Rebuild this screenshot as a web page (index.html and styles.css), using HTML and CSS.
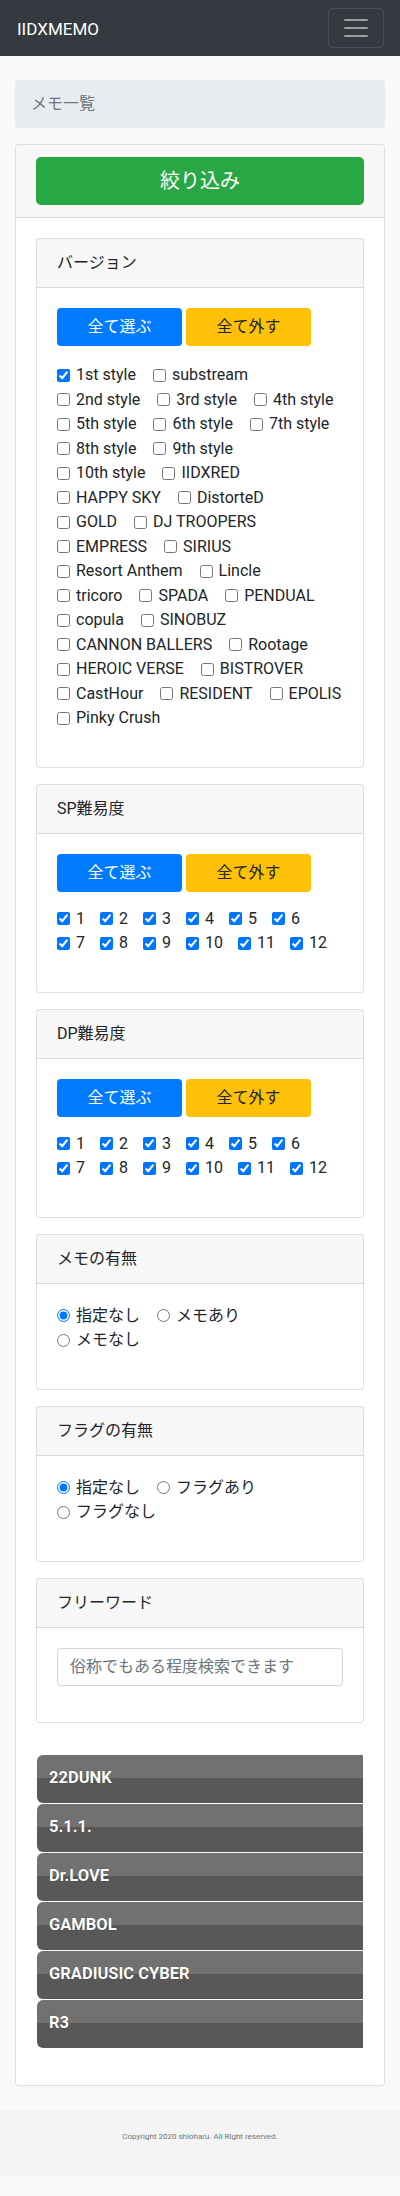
FILE: index.html
```html
<!DOCTYPE html>
<html lang="ja">
<head>
<meta charset="utf-8">
<title>IIDXMEMO</title>
<link rel="stylesheet" href="styles.css">
</head>
<body>
<nav class="navbar">
  <a class="brand" href="#">IIDXMEMO</a>
  <button class="toggler" type="button" aria-label="menu">
    <svg width="30" height="30" viewBox="0 0 30 30"><path d="M4 7h22M4 15h22M4 23h22" stroke="rgba(255,255,255,0.5)" stroke-width="2" stroke-linecap="round"/></svg>
  </button>
</nav>

<main class="container">
  <div class="breadcrumb">メモ一覧</div>

  <div class="card">
    <div class="card-header">
      <button class="btn btn-lg btn-success" type="button">絞り込み</button>
    </div>
    <div class="card-body">

      <section class="card sub">
        <div class="card-header">バージョン</div>
        <div class="card-body">
          <div class="btn-row">
            <button class="btn btn-primary" type="button">全て選ぶ</button>
            <button class="btn btn-warning" type="button">全て外す</button>
          </div>
          <div class="checks">
            <div class="row"><label class="check"><input type="checkbox" checked>1st style</label><label class="check"><input type="checkbox">substream</label></div>
            <div class="row"><label class="check"><input type="checkbox">2nd style</label><label class="check"><input type="checkbox">3rd style</label><label class="check"><input type="checkbox">4th style</label></div>
            <div class="row"><label class="check"><input type="checkbox">5th style</label><label class="check"><input type="checkbox">6th style</label><label class="check"><input type="checkbox">7th style</label></div>
            <div class="row"><label class="check"><input type="checkbox">8th style</label><label class="check"><input type="checkbox">9th style</label></div>
            <div class="row"><label class="check"><input type="checkbox">10th style</label><label class="check"><input type="checkbox">IIDXRED</label></div>
            <div class="row"><label class="check"><input type="checkbox">HAPPY SKY</label><label class="check"><input type="checkbox">DistorteD</label></div>
            <div class="row"><label class="check"><input type="checkbox">GOLD</label><label class="check"><input type="checkbox">DJ TROOPERS</label></div>
            <div class="row"><label class="check"><input type="checkbox">EMPRESS</label><label class="check"><input type="checkbox">SIRIUS</label></div>
            <div class="row"><label class="check"><input type="checkbox">Resort Anthem</label><label class="check"><input type="checkbox">Lincle</label></div>
            <div class="row"><label class="check"><input type="checkbox">tricoro</label><label class="check"><input type="checkbox">SPADA</label><label class="check"><input type="checkbox">PENDUAL</label></div>
            <div class="row"><label class="check"><input type="checkbox">copula</label><label class="check"><input type="checkbox">SINOBUZ</label></div>
            <div class="row"><label class="check"><input type="checkbox">CANNON BALLERS</label><label class="check"><input type="checkbox">Rootage</label></div>
            <div class="row"><label class="check"><input type="checkbox">HEROIC VERSE</label><label class="check"><input type="checkbox">BISTROVER</label></div>
            <div class="row"><label class="check"><input type="checkbox">CastHour</label><label class="check"><input type="checkbox">RESIDENT</label><label class="check"><input type="checkbox">EPOLIS</label></div>
            <div class="row"><label class="check"><input type="checkbox">Pinky Crush</label></div>
          </div>
        </div>
      </section>

      <section class="card sub">
        <div class="card-header">SP難易度</div>
        <div class="card-body">
          <div class="btn-row">
            <button class="btn btn-primary" type="button">全て選ぶ</button>
            <button class="btn btn-warning" type="button">全て外す</button>
          </div>
          <div class="checks nums">
            <div class="row"><label class="check"><input type="checkbox" checked>1</label><label class="check"><input type="checkbox" checked>2</label><label class="check"><input type="checkbox" checked>3</label><label class="check"><input type="checkbox" checked>4</label><label class="check"><input type="checkbox" checked>5</label><label class="check"><input type="checkbox" checked>6</label></div>
            <div class="row"><label class="check"><input type="checkbox" checked>7</label><label class="check"><input type="checkbox" checked>8</label><label class="check"><input type="checkbox" checked>9</label><label class="check"><input type="checkbox" checked>10</label><label class="check"><input type="checkbox" checked>11</label><label class="check"><input type="checkbox" checked>12</label></div>
          </div>
        </div>
      </section>

      <section class="card sub">
        <div class="card-header">DP難易度</div>
        <div class="card-body">
          <div class="btn-row">
            <button class="btn btn-primary" type="button">全て選ぶ</button>
            <button class="btn btn-warning" type="button">全て外す</button>
          </div>
          <div class="checks nums">
            <div class="row"><label class="check"><input type="checkbox" checked>1</label><label class="check"><input type="checkbox" checked>2</label><label class="check"><input type="checkbox" checked>3</label><label class="check"><input type="checkbox" checked>4</label><label class="check"><input type="checkbox" checked>5</label><label class="check"><input type="checkbox" checked>6</label></div>
            <div class="row"><label class="check"><input type="checkbox" checked>7</label><label class="check"><input type="checkbox" checked>8</label><label class="check"><input type="checkbox" checked>9</label><label class="check"><input type="checkbox" checked>10</label><label class="check"><input type="checkbox" checked>11</label><label class="check"><input type="checkbox" checked>12</label></div>
          </div>
        </div>
      </section>

      <section class="card sub">
        <div class="card-header">メモの有無</div>
        <div class="card-body">
          <div class="checks">
            <div class="row"><label class="check"><input type="radio" name="memo" checked>指定なし</label><label class="check"><input type="radio" name="memo">メモあり</label></div>
            <div class="row"><label class="check"><input type="radio" name="memo">メモなし</label></div>
          </div>
        </div>
      </section>

      <section class="card sub">
        <div class="card-header">フラグの有無</div>
        <div class="card-body">
          <div class="checks">
            <div class="row"><label class="check"><input type="radio" name="flag" checked>指定なし</label><label class="check"><input type="radio" name="flag">フラグあり</label></div>
            <div class="row"><label class="check"><input type="radio" name="flag">フラグなし</label></div>
          </div>
        </div>
      </section>

      <section class="card sub">
        <div class="card-header">フリーワード</div>
        <div class="card-body">
          <input class="form-control" type="text" placeholder="俗称でもある程度検索できます">
        </div>
      </section>

      <ul class="songs">
        <li class="song">22DUNK</li>
        <li class="song">5.1.1.</li>
        <li class="song">Dr.LOVE</li>
        <li class="song">GAMBOL</li>
        <li class="song">GRADIUSIC CYBER</li>
        <li class="song">R3</li>
      </ul>
    </div>
  </div>
</main>

<footer class="footer">
  <p>Copyright 2020 shioharu. All Right reserved.</p>
</footer>
</body>
</html>
```

FILE: styles.css
```css
* { box-sizing: border-box; }

body {
  margin: 0;
  background: #f8f9fa;
  color: #212529;
  font-family: Roboto, "Noto Sans CJK JP", sans-serif;
  font-size: 16px;
  line-height: 1.5;
}

.navbar {
  height: 56px;
  background: #343a40;
  padding: 8px 16px 8px 17px;
  display: flex;
  align-items: center;
  justify-content: space-between;
}
.brand {
  color: #fff;
  text-decoration: none;
  font-size: 17px;
  line-height: 30px;
  margin-top: 2px;
}
.toggler {
  width: 56px;
  height: 40px;
  background: transparent;
  border: 1px solid rgba(255,255,255,0.1);
  border-radius: 4px;
  padding: 0;
  display: flex;
  align-items: center;
  justify-content: center;
}

.container {
  padding: 24px 15px 24px;
}

.breadcrumb {
  background: #e9ecef;
  border-radius: 4px;
  padding: 12px 16px;
  margin-bottom: 16px;
  color: #6c757d;
}

.card {
  background: #fff;
  border: 1px solid rgba(0,0,0,0.125);
  border-radius: 4px;
}
.card-header {
  background: rgba(0,0,0,0.03);
  border-bottom: 1px solid rgba(0,0,0,0.125);
  padding: 12px 20px;
}
.card-body {
  padding: 20px;
}
.card.sub {
  margin-bottom: 16px;
}

.btn {
  font-family: inherit;
  font-size: 16px;
  line-height: 24px;
  border: 1px solid transparent;
  border-radius: 4px;
  padding: 6px 12px;
  cursor: pointer;
}
.btn-lg {
  display: block;
  width: 100%;
  height: 48px;
  font-size: 20px;
  line-height: 30px;
  border-radius: 5px;
}
.btn-success { background: #28a745; color: #fff; }
.btn-primary { background: #007bff; color: #fff; }
.btn-warning { background: #ffc107; color: #212529; }

.btn-row {
  display: flex;
  gap: 4px;
  margin-bottom: 17px;
}
.card-body .btn-row:has(+ .nums) {
  margin-bottom: 15px;
}
.btn-row .btn {
  width: 125px;
  height: 38px;
}

.checks {
  margin-bottom: 16px;
}
.row {
  display: flex;
  height: 24.5px;
  align-items: center;
  gap: 17px;
}
.nums .row { gap: 15px; }
.check {
  display: flex;
  align-items: center;
  gap: 6px;
  white-space: nowrap;
}
.check input {
  margin: 0;
  width: 13px;
  height: 13px;
}

.form-control {
  display: block;
  width: 100%;
  height: 38px;
  padding: 6px 12px;
  font-family: inherit;
  font-size: 16px;
  line-height: 24px;
  color: #495057;
  background: #fff;
  border: 1px solid #ced4da;
  border-radius: 4px;
  margin-bottom: 16px;
}
.form-control::placeholder { color: #6c757d; }

.songs {
  list-style: none;
  margin: 32px 1px 17px;
  padding: 0;
}
.song {
  height: 48px;
  margin-bottom: 1px;
  padding: 0 12px;
  display: flex;
  align-items: center;
  border-radius: 6px 0 0 6px;
  background: linear-gradient(#717171 0, #717171 48%, #585858 48%, #585858 100%);
  color: #fff;
  font-weight: bold;
  font-size: 16.5px;
  text-shadow: 0 0 1px rgba(0,0,0,0.6);
}
.song:last-child { margin-bottom: 0; }

.footer {
  background: #f4f4f4;
  height: 65px;
  padding-top: 21px;
  text-align: center;
}
.footer p {
  margin: 0;
  font-size: 8px;
  line-height: 12px;
  color: #6c757d;
}
```
